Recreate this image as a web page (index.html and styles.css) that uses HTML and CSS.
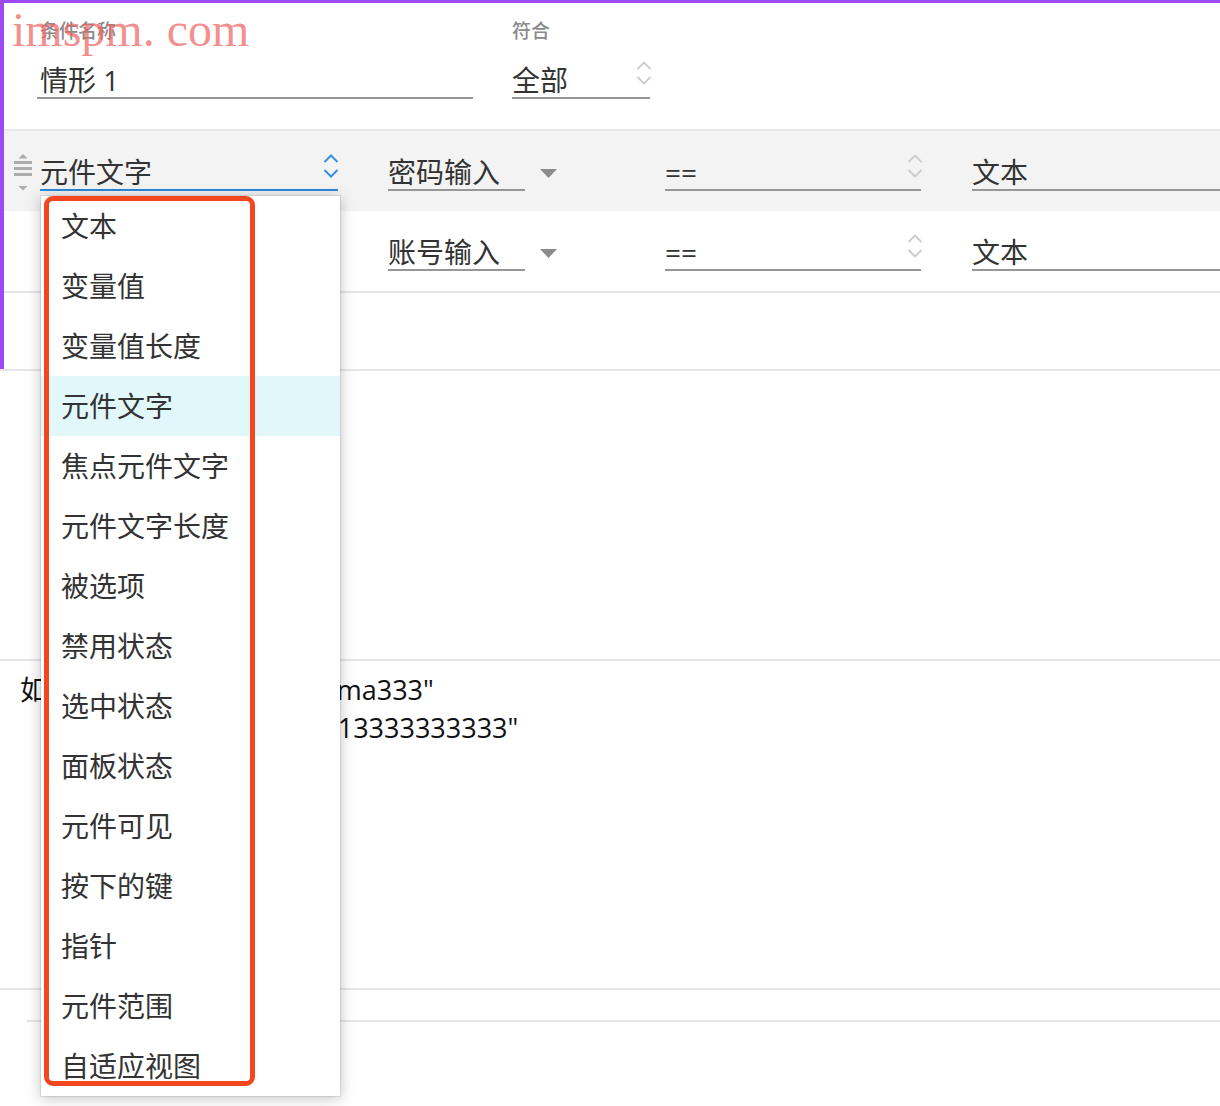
FILE: index.html
```html
<!DOCTYPE html>
<html lang="zh-CN">
<head>
<meta charset="utf-8">
<title>条件设立</title>
<link rel="stylesheet" href="styles.css">
</head>
<body>
<div class="page">
  <div class="watermark">imspm. com</div>

  <section class="case">
    <div class="case-head">
      <div class="field field-name">
        <div class="field-label">条件名称</div>
        <div class="input input-name">情形 1</div>
      </div>
      <div class="field field-match">
        <div class="field-label">符合</div>
        <div class="input select">全部
          <svg class="chev chev-muted" viewBox="0 0 18 26" width="18" height="26"><path d="M2.5 9 L9 2.5 L15.5 9 M2.5 17 L9 23.5 L15.5 17" fill="none" stroke="currentColor" stroke-width="1.8"/></svg>
        </div>
      </div>
    </div>

    <div class="cond-list">
      <div class="cond-row is-hover">
        <svg class="handle" viewBox="0 0 18 38" width="18" height="38"><path d="M4.5 4.5 L9 0 L13.5 4.5Z"/><rect y="7" width="18" height="3"/><rect y="13" width="18" height="3"/><rect y="19" width="18" height="3"/><path d="M4.5 32 L9 36.5 L13.5 32Z"/></svg>
        <div class="input select col-type is-focus">元件文字
          <svg class="chev chev-blue" viewBox="0 0 18 26" width="18" height="26"><path d="M2.5 9 L9 2.5 L15.5 9 M2.5 17 L9 23.5 L15.5 17" fill="none" stroke="currentColor" stroke-width="2"/></svg>
        </div>
        <div class="col-target">
          <div class="input">密码输入</div>
          <svg class="tri" viewBox="0 0 17 9" width="17" height="9"><path d="M0 0 H17 L8.5 9Z"/></svg>
        </div>
        <div class="input select col-op">==
          <svg class="chev chev-muted" viewBox="0 0 18 26" width="18" height="26"><path d="M2.5 9 L9 2.5 L15.5 9 M2.5 17 L9 23.5 L15.5 17" fill="none" stroke="currentColor" stroke-width="1.8"/></svg>
        </div>
        <div class="input col-value">文本</div>
      </div>

      <div class="cond-row">
        <svg class="handle is-hidden" viewBox="0 0 18 38" width="18" height="38"><path d="M4.5 4.5 L9 0 L13.5 4.5Z"/><rect y="7" width="18" height="3"/><rect y="13" width="18" height="3"/><rect y="19" width="18" height="3"/><path d="M4.5 32 L9 36.5 L13.5 32Z"/></svg>
        <div class="input select col-type is-covered">元件文字</div>
        <div class="col-target">
          <div class="input">账号输入</div>
          <svg class="tri" viewBox="0 0 17 9" width="17" height="9"><path d="M0 0 H17 L8.5 9Z"/></svg>
        </div>
        <div class="input select col-op">==
          <svg class="chev chev-muted" viewBox="0 0 18 26" width="18" height="26"><path d="M2.5 9 L9 2.5 L15.5 9 M2.5 17 L9 23.5 L15.5 17" fill="none" stroke="currentColor" stroke-width="1.8"/></svg>
        </div>
        <div class="input col-value">文本</div>
      </div>
    </div>

    <div class="case-foot"></div>
  </section>

  <div class="gap-area"></div>

  <div class="desc">
    <p class="desc-line">如果 文字于 密码输入 == "ma333"</p>
    <p class="desc-line desc-indent">和 文字于 账号输入 == "13333333333"</p>
  </div>

  <div class="footer">
    <div class="footer-inner"></div>
  </div>

  <ul class="menu">
    <li>文本</li>
    <li>变量值</li>
    <li>变量值长度</li>
    <li class="is-active">元件文字</li>
    <li>焦点元件文字</li>
    <li>元件文字长度</li>
    <li>被选项</li>
    <li>禁用状态</li>
    <li>选中状态</li>
    <li>面板状态</li>
    <li>元件可见</li>
    <li>按下的键</li>
    <li>指针</li>
    <li>元件范围</li>
    <li>自适应视图</li>
  </ul>
  <div class="annotation"></div>
</div>
</body>
</html>
```

FILE: styles.css
```css
* { box-sizing: border-box; }

html, body {
  margin: 0;
  padding: 0;
  background: #fff;
}

body {
  font-family: "Open Sans", "Noto Sans CJK SC", sans-serif;
  color: #333;
  width: 1220px;
  height: 1106px;
  overflow: hidden;
}

.page {
  position: relative;
  width: 1220px;
  height: 1106px;
  overflow: hidden;
}

/* watermark */
.watermark {
  position: absolute;
  left: 12px;
  top: 6px;
  z-index: 5;
  font-family: "Liberation Serif", serif;
  font-size: 48px;
  line-height: 1;
  color: rgba(238, 100, 100, 0.72);
  pointer-events: none;
}

/* case section */
.case {
  border-top: 3px solid #9d4af3;
  border-left: 4px solid #9d4af3;
}

.case-head {
  display: flex;
  padding: 16px 0 30px 33px;
}

.field-label {
  font-size: 19px;
  line-height: 24px;
  color: #8a8a8a;
  font-weight: 500;
  margin-bottom: 20px;
}

.field-name .field-label { padding-left: 3px; }

.field-name { width: 436px; }

.field-match {
  margin-left: 39px;
  width: 138px;
}

.input {
  position: relative;
  font-size: 28px;
  line-height: 34px;
  height: 36px;
  color: #333;
  border-bottom: 2px solid #979797;
  white-space: nowrap;
}

.input-name { padding-left: 3px; }

.chev {
  position: absolute;
  right: -3px;
  top: -3px;
}

.chev-muted { color: #cbcbcb; }
.chev-blue { color: #3a8fdb; }

/* condition rows */
.cond-list {
  border-top: 2px solid #e8e8e8;
  border-bottom: 2px solid #e6e6e6;
}

.cond-row {
  display: flex;
  align-items: flex-start;
  height: 80px;
  padding-top: 24px;
}

.cond-row.is-hover { background: #f3f3f3; }

.handle {
  margin-left: 10px;
  margin-top: -1px;
  fill: #ababab;
  flex: none;
}

.handle.is-hidden { visibility: hidden; }

.col-type {
  margin-left: 8px;
  width: 298px;
  flex: none;
}

.col-type .chev { right: -2px; top: -2px; }

.col-type.is-focus { border-bottom-color: #2b88d8; }

.col-type.is-covered { border-bottom-color: transparent; }

.col-target {
  display: flex;
  align-items: flex-start;
  margin-left: 50px;
  flex: none;
}

.col-target .input { width: 137px; }

.tri {
  margin-left: 15px;
  margin-top: 14px;
  fill: #8c8c8c;
}

.col-op {
  margin-left: 108px;
  width: 256px;
  flex: none;
}

.col-op .chev { top: -2px; }

.col-value {
  margin-left: 51px;
  flex: 1;
}

.case-foot { height: 76px; }

/* blank area */
.gap-area {
  height: 290px;
  border-top: 2px solid #e6e6e6;
}

/* description */
.desc {
  border-top: 2px solid #e6e6e6;
  padding: 10px 0 241px 20px;
}

.desc-line {
  margin: 0;
  font-size: 27px;
  line-height: 38px;
  word-spacing: 1px;
  color: #111;
  white-space: nowrap;
}

.desc-indent { padding-left: 28px; }

.footer {
  border-top: 2px solid #e6e6e6;
  padding-top: 30px;
}

.footer-inner {
  margin-left: 27px;
  border-top: 2px solid #e6e6e6;
  height: 100px;
}

/* dropdown menu */
.menu {
  position: absolute;
  left: 41px;
  top: 196px;
  width: 299px;
  height: 900px;
  margin: 0;
  padding: 0;
  list-style: none;
  background: #fff;
  box-shadow: 0 2px 14px rgba(0, 0, 0, 0.25), 0 0 0 1px rgba(0, 0, 0, 0.08);
  z-index: 3;
}

.menu li {
  height: 60px;
  line-height: 60px;
  padding-left: 20px;
  font-size: 28px;
  color: #333;
  white-space: nowrap;
}

.menu li.is-active { background: #e2f7fa; }

/* red annotation box */
.annotation {
  position: absolute;
  left: 44px;
  top: 196px;
  width: 211px;
  height: 890px;
  border: 5px solid #f2461f;
  border-radius: 9px;
  z-index: 4;
}
```
